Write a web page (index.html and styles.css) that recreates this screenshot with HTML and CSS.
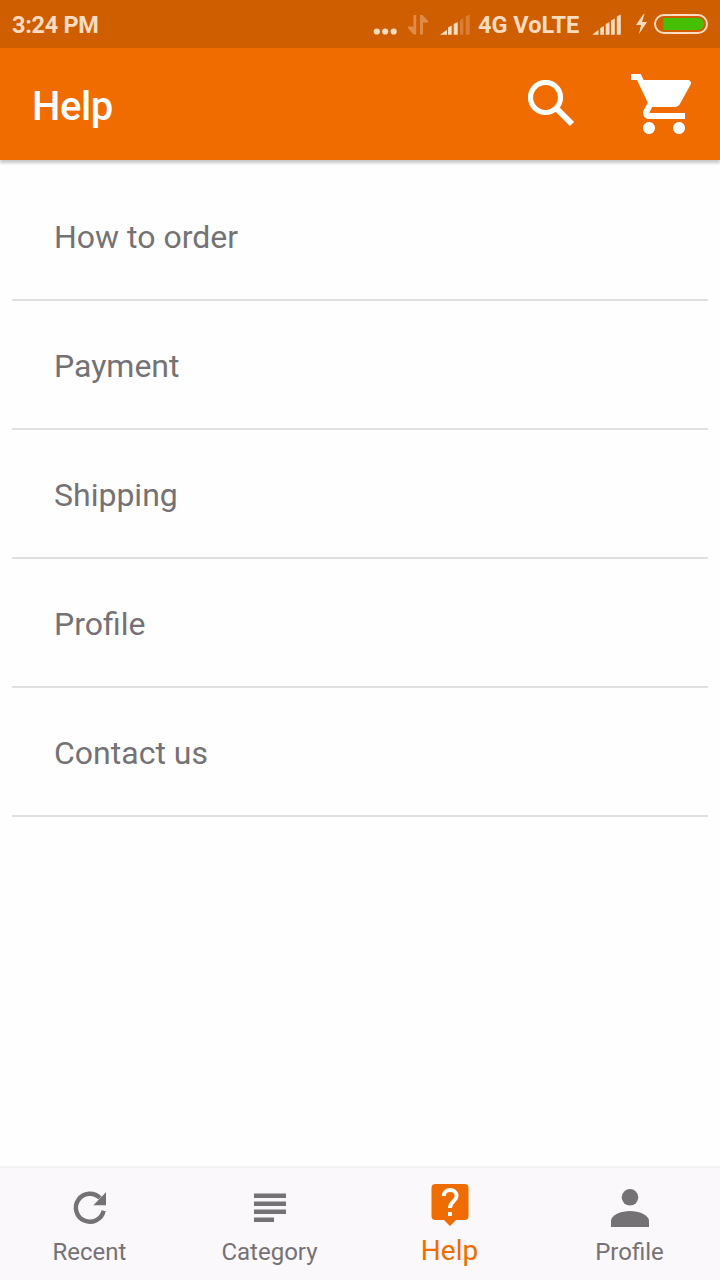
FILE: index.html
```html
<!DOCTYPE html>
<html lang="en">
<head>
<meta charset="utf-8">
<title>Help</title>
<link rel="stylesheet" href="styles.css">
</head>

<body>
<div class="screen">
  <div class="statusbar">
    <span class="time">3:24 PM</span>
    <svg class="status-icons" width="98" height="48" viewBox="0 0 98 48">
      <g fill="#fbdcc0">
        <circle cx="3.800" cy="31.500" r="3.100" />
        <circle cx="12.200" cy="31.500" r="3.100" />
        <circle cx="20.700" cy="31.500" r="3.100" />
        <path d="M67 34.700l7-5v5zM75 27.500l3.700-2v9.200H75zM80.700 24l4-2v12.700h-4z" />
      </g>
      <g fill="#df8c4b">
        <path d="M40.500 15h2.700v19.500h-2.700l-5.500-6.500v-1.500h5.500zM47 34.500v-19.500h2.500l5.500 6v1.500h-5v12z" />
        <path d="M87 20l3.300-1.500v16.200H87zM92.700 16.500l4-2v20.200h-4z" opacity=".7" />
      </g>
    </svg>
    <span class="network">4G VoLTE</span>
    <svg class="status-icons" width="122" height="48" viewBox="0 0 122 48">
      <g fill="#fbdcc0">
        <path d="M5.300 34.700l6.200-5v5zM13.300 28l3.700-2v8.700h-3.700zM18.700 24l3.800-2v12.700h-3.800zM24 20.500l3.800-2v16.200H24zM29.800 16.500l4-2v20.200h-4z" />
        <path d="M56.500 14l-7.500 11h5l-2 9 8-12h-5l2.500-8z" />
      </g>
      <rect x="68" y="15" width="52" height="18" rx="9" fill="none" stroke="#fbdcc0" stroke-width="2" />
      <path d="M76.500 18h34.500a6 6 0 0 1 0 12h-34.500z" fill="#45c006" />
    </svg>
  </div>

  <div class="toolbar">
    <h1 class="title">Help</h1>
    <svg class="search" width="48" height="48" viewBox="0 0 48 48" fill="none" stroke="#fff">
      <circle cx="18.500" cy="17.500" r="15" stroke-width="5.200" />
      <path d="M28.500 27.500L45 44" stroke-width="6" />
    </svg>
    <svg class="cart" width="72" height="72" viewBox="0 0 24 24" fill="#fff">
      <path d="M7 18c-1.100 0-1.990.900-1.990 2S5.900 22 7 22s2-.900 2-2-.900-2-2-2zM1 2v2h2l3.600 7.590-1.350 2.450c-.160.280-.250.610-.250.960 0 1.100.900 2 2 2h12v-2H7.420c-.140 0-.250-.110-.250-.250l.030-.120.900-1.630h7.450c.750 0 1.410-.410 1.750-1.030l3.580-6.490c.080-.140.120-.310.120-.480 0-.550-.450-1-1-1H5.210l-.940-2H1zm16 16c-1.100 0-1.990.900-1.990 2s.890 2 1.990 2 2-.900 2-2-.900-2-2-2z" />
    </svg>
  </div>

  <ul class="list">
    <li class="item">How to order</li>
    <li class="item">Payment</li>
    <li class="item">Shipping</li>
    <li class="item">Profile</li>
    <li class="item">Contact us</li>
  </ul>

  <div class="tabs">
    <div class="tab">
      <svg width="48" height="48" viewBox="0 0 48 48">
        <path d="M37.600 26.700A14 14 0 1 1 34 14" fill="none" stroke="#757275" stroke-width="4.400" />
        <path d="M40 8.300v13H27.300z" fill="#757275" />
      </svg>
      <span>Recent</span>
    </div>
    <div class="tab">
      <svg width="48" height="48" viewBox="0 0 48 48" fill="#757275">
        <path d="M8 9.500h32v4.600H8zM8 17.500h32v4.600H8zM8 25.500h32v4.600H8zM8 33.500h20v4.600H8z" />
      </svg>
      <span>Category</span>
    </div>
    <div class="tab active">
      <svg width="48" height="48" viewBox="0 0 48 48">
        <path d="M9.500 4h29a4 4 0 0 1 4 4v28a4 4 0 0 1-4 4H30l-6 6-6-6H9.500a4 4 0 0 1-4-4V8a4 4 0 0 1 4-4z" fill="#ef6c00" />
        <path d="M17.800 16c0-8 12.800-8 12.800 0 0 5-6.600 5.500-6.600 12" fill="none" stroke="#fff" stroke-width="4" />
        <path d="M22 32h4v4h-4z" fill="#fff" />
      </svg>
      <span>Help</span>
    </div>
    <div class="tab">
      <svg width="48" height="48" viewBox="0 0 48 48" fill="#757275">
        <circle cx="24" cy="13.300" r="8.300" />
        <path d="M5 43v-6c0-6 10-10 19-10s19 4 19 10v6z" />
      </svg>
      <span>Profile</span>
    </div>
  </div>
</div>
</body>
</html>
```

FILE: styles.css
```css
html, body
{
  margin: 0;
  padding: 0;
  font-family: Roboto, "Noto Sans", sans-serif;
}

.screen
{
  display: flex;
  flex-direction: column;
  width: 720px;
  height: 1280px;
  overflow: hidden;
  background-color: #fefefe;
}

.statusbar
{
  display: flex;
  align-items: center;
  height: 48px;
  padding-left: 12px;
  box-sizing: border-box;
  color: #fbdcc0;
  background-color: #cf5e00;
  font-size: 23.5px;
  font-weight: 700;
  line-height: 48px;
  white-space: nowrap;
}

.status-icons
{
  flex: none;
}

.time
{
  width: 361px;
  padding-top: 2px;
  letter-spacing: -0.3px;
}

.network
{
  width: 101px;
  margin: 0 8px 0 7px;
  padding-top: 2px;
}

.toolbar
{
  display: flex;
  align-items: flex-start;
  height: 112px;
  padding-left: 32px;
  box-sizing: border-box;
  color: #fff;
  background-color: #f06c00;
  box-shadow: 0 3px 3px rgba(0, 0, 0, 0.22);
}

.title
{
  width: 495px;
  margin: 0;
  font-size: 40px;
  font-weight: 500;
  line-height: 118px;
  letter-spacing: -0.4px;
}

.search
{
  margin: 32px 53px 0 0;
}

.cart
{
  margin-top: 20px;
}

.list
{
  flex: 1;
  margin: 12px 12px 0 12px;
  padding: 0;
  list-style: none;
}

.item
{
  height: 129px;
  padding-left: 42px;
  box-sizing: border-box;
  border-bottom: solid 2px #e0dfe1;
  color: #757275;
  font-size: 32px;
  line-height: 130px;
}

.tabs
{
  display: flex;
  height: 114px;
  box-sizing: border-box;
  border-top: solid 2px #f3f1f4;
  background-color: #faf8fb;
}

.tab
{
  display: flex;
  flex: 1;
  flex-direction: column;
  align-items: center;
  padding-top: 16px;
  color: #757275;
  font-size: 24px;
  line-height: 40px;
}

.tab span
{
  margin-right: 1px;
}

.active
{
  padding-top: 12px;
  color: #ef6c00;
  font-size: 28px;
  line-height: 46px;
}
```
